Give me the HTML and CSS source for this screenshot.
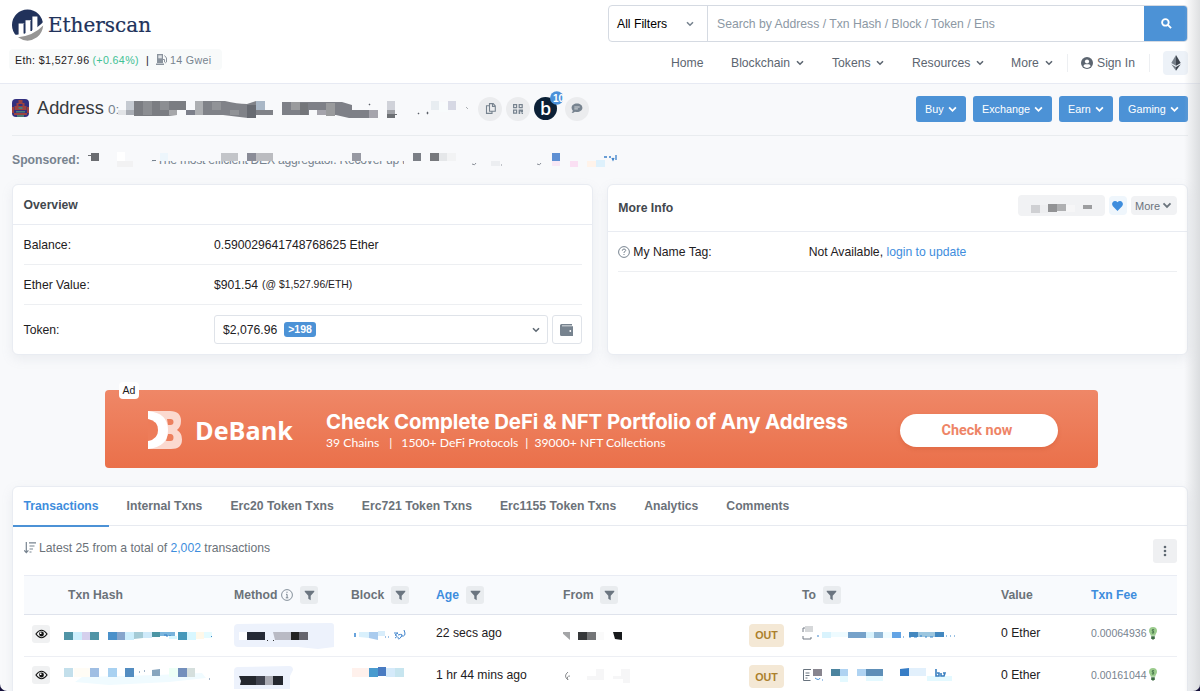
FILE: index.html
```html
<!DOCTYPE html>
<html lang="en">
<head>
    <meta charset="UTF-8">
    <title>Address | Etherscan</title>
    <link rel="stylesheet" href="styles.css">
</head>
<body>
    <!-- shared icons -->
    <svg class="sprite" width="0" height="0">
        <symbol id="chev" viewBox="0 0 8 6"><path d="M1 1.2l3 3 3-3" fill="none" stroke="currentColor" stroke-width="1.6"/></symbol>
        <symbol id="funnel" viewBox="0 0 12 12"><path d="M.8 .8h10.4v1L7.3 6.2v5L4.7 9.6V6.2L.8 1.8z" fill="currentColor"/></symbol>
        <symbol id="eye" viewBox="0 0 14 10"><path d="M1 5q6-8 12 0q-6 8-12 0z" fill="none" stroke="currentColor" stroke-width="1.2"/><circle cx="7" cy="5" r="2.6" fill="currentColor"/><circle cx="6.2" cy="4.1" r=".9" fill="#fff"/></symbol>
        <symbol id="bulb" viewBox="0 0 8 13"><path d="M4 0a4 4 0 0 1 4 4c0 2-1.6 2.6-1.8 4.8H1.8C1.6 6.6 0 6 0 4a4 4 0 0 1 4-4z" fill="#9bcb8d"/><path d="M2.2 9.3h3.6v2L4.8 12.6H3.2L2.2 11.3z" fill="#3c6b42"/><path d="M5.2 2.9q-1.2-.7-2 0t.8 1.3t.8 1.4t-2 0M4 2v4.8" fill="none" stroke="#3c6b42" stroke-width=".7"/></symbol>
    </svg>

    <div class="page">
        <header class="header">
            <div class="brand">
                <svg class="logo" width="142" height="34" viewBox="12 8 142 34">
                    <circle cx="27.5" cy="25" r="15.5" fill="#21325b"/>
                    <path d="M12 35Q32 35 45 20V44H12z" fill="#fff"/>
                    <path d="M18 37.2Q33 36 43.2 25.5Q42.5 33 37 37.3Q27.5 44 18 37.2z" fill="#979695"/>
                    <path d="M18.6 36V23.4h5.6V35zM25.5 34V20.2h5.4V32zM32.4 31V16.4h5V28z" fill="#fff"/>
                    <path d="M24.3 24v9.5M31.2 21v10" stroke="#21325b" stroke-width="1.5"/>
                    <text x="48" y="31.7" textLength="103" lengthAdjust="spacingAndGlyphs" class="logo-text">Etherscan</text>
                </svg>
                <div class="price">
                    <span class="price-eth">Eth: $1,527.96</span>
                    <span class="price-up">(+0.64%)</span>
                    <span class="price-bar">|</span>
                    <svg width="12" height="11" viewBox="0 0 12 11"><path d="M1 0h6v9H1zM0 9.5h8V11H0z" fill="#8a939d"/><path d="M2.3 1.3h3.5v3H2.3z" fill="#dfe3e6"/><path d="M7 5.5h1.5V8q1 1.5 2 0V4L8.5 1.5" fill="none" stroke="#8a939d"/></svg>
                    <span class="gwei">14 Gwei</span>
                </div>
            </div>
            <div class="header-right">
                <div class="search">
                    <div class="filters">All Filters <svg width="8" height="6"><use href="#chev"/></svg></div>
                    <div class="search-input">Search by Address / Txn Hash / Block / Token / Ens</div>
                    <div class="search-btn"><svg width="11" height="11" viewBox="0 0 12 12" fill="none" stroke="#fff" stroke-width="2"><circle cx="4.8" cy="4.8" r="3.6"/><path d="M7.5 7.5l3.5 3.5"/></svg></div>
                </div>
                <nav class="nav">
                    <span class="nav-home">Home</span>
                    <span class="nav-chain">Blockchain <svg width="8" height="6"><use href="#chev"/></svg></span>
                    <span class="nav-tokens">Tokens <svg width="8" height="6"><use href="#chev"/></svg></span>
                    <span class="nav-res">Resources <svg width="8" height="6"><use href="#chev"/></svg></span>
                    <span class="nav-more">More <svg width="8" height="6"><use href="#chev"/></svg></span>
                    <span class="sign-in">
                        <svg width="12" height="12" viewBox="0 0 12 12"><circle cx="6" cy="6" r="6" fill="#5c6570"/><circle cx="6" cy="4.5" r="2.1" fill="#fff"/><path d="M2.3 9.3q.5-2 2-2h3.4q1.5 0 2 2Q6 12.5 2.3 9.3z" fill="#fff"/></svg>
                        Sign In
                    </span>
                    <span class="eth-btn"><svg width="10" height="16" viewBox="0 0 10 17"><path d="M5 0L0 8.5 5 11.5z" fill="#77808a"/><path d="M5 0l5 8.5-5 3z" fill="#3d444d"/><path d="M0 9.8l5 7v-4z" fill="#77808a"/><path d="M10 9.8l-5 7v-4z" fill="#3d444d"/></svg></span>
                </nav>
            </div>
        </header>

        <section class="address">
            <svg class="blockie" width="17" height="18" viewBox="0 0 17 18">
                <rect width="17" height="18" rx="4" fill="#33307f"/>
                <path d="M6.5 1h4v3h2v3h2v4h-12V7h2V4h2zM0 8h2v6H0zM15 8h2v6h-2zM2 14h13v2H2z" fill="#9b4240"/>
                <path d="M6.5 8h4v2h-4zM4 12h9v1.5H4zM5 16h7v2H5z" fill="#4a7d79"/>
                <path d="M6.5 5h4v2h-4z" fill="#33307f"/>
            </svg>
            <h1>Address</h1>
            <svg class="hash" width="366" height="28" viewBox="108 94 366 28">
                <text x="108" y="113" class="hash-text">0:</text>
                <path d="M118 109h8v5h-8z" fill="#e2e4e7"/><path d="M126 100h8v9h-8z" fill="#c5cad1"/><path d="M126 109h8v5h-8z" fill="#a9adb4"/>
                <path d="M134 100h52v9h-9v5l-9 1h-34z" fill="#7b7d82"/><path d="M143 100h9v14h-9zM160 100h9v9h-9z" fill="#8c8e92"/><path d="M169 109h8v5h-8z" fill="#a6a7aa"/>
                <path d="M186 109h9v5h-9z" fill="#7c7f8a"/><path d="M195 100h30q12 3 22 3l9-3h9v9h8v5h-18l-7 3-25-3h-28z" fill="#808288"/><path d="M195 100h8v14h-8z" fill="#adafb2"/><path d="M212 101h9v8h-9zM230 109h9v5h-9z" fill="#919397"/><path d="M256 100h9v9h-9z" fill="#a9b7c6"/><path d="M247 104h9v13h-9z" fill="#686b72"/>
                <path d="M282 101h60l10 3v5h26v8h-29l-13-3h-19v-5h-8v5h-27z" fill="#7e8087"/><path d="M291 101h9v8h-9zM326 102h9v13h-9z" fill="#9a9b9d"/><path d="M300 102h8v12h-8z" fill="#74767a"/><path d="M369 109h9v8h-9zM317 109h9v5h-9z" fill="#a5a4ac"/>
                <path d="M387 100h8v9h-8z" fill="#d0d2d9"/><path d="M387 109h8v4h-8z" fill="#9fa1a6"/><path d="M387 113h10v1h-2v3h-8z" fill="#6d7074"/>
                <path d="M431 100h8v9h-8z" fill="#e8edf1"/><path d="M439 101h9v10h-9z" fill="#f8fbfc"/><path d="M448 100h8v9h-8z" fill="#d6d8e4"/>
                <path d="M369 103h1v1h-1zM418 112h1v1h-1zM427 111h1v2h-1zM466 106l2 2" fill="#5d6269" stroke="#5d6269" stroke-width=".5"/>
            </svg>
            <div class="tools">
                <span class="tool"><svg width="11" height="11" viewBox="0 0 11 11" fill="none" stroke="#77838f" stroke-width="1.1"><path d="M4.5 .6h3.7L10.3 3v5.2H4.5zM7.5 .8v2.6h2.6M4.3 2.8H1.5v7.6h5.5V8.5"/></svg></span>
                <span class="tool"><svg width="10" height="10" viewBox="0 0 10 10"><path d="M.6.6h3v3h-3zM6.2.6h3v3h-3zM.6 6.2h3v3h-3z" fill="none" stroke="#77838f" stroke-width="1.2"/><path d="M5.6 5.6H10v3H8V7.5h-.8V10H5.6zM8.6 9H10v1H8.6z" fill="#77838f"/></svg></span>
                <span class="tool tool-b">b<svg class="badge" width="13" height="14" viewBox="0 0 13 14"><circle cx="6.8" cy="7" r="6.8" fill="#4a90d9"/><text x="3" y="11">10</text></svg></span>
                <span class="tool"><svg width="12" height="11" viewBox="0 0 12 11"><path d="M6 .5c3 0 5.4 1.8 5.4 4.3S9 9 6 9q-1 0-2-.3Q2.5 10 .6 10q1.2-1.2 1.2-2.2Q.6 6.5.6 4.8C.6 2.3 3 .5 6 .5z" fill="#77838f"/><path d="M3.3 4h5.4M3.3 5.9h3.6" stroke="#ebeef0" stroke-width=".8"/></svg></span>
            </div>
            <div class="actions">
                <span class="btn btn-buy">Buy <svg width="9" height="7"><use href="#chev"/></svg></span>
                <span class="btn btn-exchange">Exchange <svg width="9" height="7"><use href="#chev"/></svg></span>
                <span class="btn btn-earn">Earn <svg width="9" height="7"><use href="#chev"/></svg></span>
                <span class="btn btn-gaming">Gaming <svg width="9" height="7"><use href="#chev"/></svg></span>
            </div>
        </section>

        <section class="sponsored">
            <b>Sponsored:</b>
            <svg width="536" height="20" viewBox="86 150 536 20">
                <text x="150" y="164" textLength="262" class="ad-line">- The most efficient DEX aggregator. Recover up to</text>
                <path d="M86 150h536v11H86z" fill="#f8f9fb"/><path d="M152 160.500h4" stroke="#77838f"/><path d="M404 160h9v8h-9z" fill="#f8f9fb"/>
                <path d="M91 153h8v8h-8z" fill="#6b6d71"/><path d="M88 155h3v1h-3z" fill="#6b6d71"/><path d="M117 152h8v9h-8z" fill="#fff"/><path d="M117 161h16v6h-16z" fill="#f2f2f3"/><path d="M160 153h8v8h-8z" fill="#edf6fc"/>
                <path d="M221 153h17v8h-13l-4 1z" fill="#c3c5c9"/><path d="M247 153h9v8h-9z" fill="#8a8c97"/><path d="M256 153h17v8h-17z" fill="#bbbcc0"/>
                <path d="M352 153h9v8h-9z" fill="#9799a2"/><path d="M413 153h8v8h-8z" fill="#7b7f86"/><path d="M430 153h9v8h-9z" fill="#77797d"/><path d="M439 153h8v8h-8z" fill="#e5e7e9"/><path d="M447 153h9v8h-9z" fill="#f2f3f4"/>
                <path d="M472 164q3 2 4-1M501 165h1M537 164q3 2 4-1" fill="none" stroke="#8a8f98"/><path d="M491 161h9v5h-9z" fill="#eceef1"/><path d="M552 153h8v8h-8z" fill="#5e90d3"/><path d="M552 161h8v5h-8z" fill="#f8e8f5"/><path d="M570 161h8v6h-8z" fill="#fadff3"/><path d="M587 161h9v6h-9z" fill="#fff3ea"/><path d="M596 160h9v7h-9z" fill="#def1fc"/><path d="M604 157h3m2 0h2m1 1l1 2 1-2M616 155v5" fill="none" stroke="#3b80c9" stroke-width="1.300"/>
            </svg>
        </section>

        <section class="cards">
            <div class="card overview">
                <div class="card-title">Overview</div>
                <div class="card-body">
                    <div class="info-row"><span class="label">Balance:</span>0.590029641748768625 Ether</div>
                    <div class="info-row"><span class="label">Ether Value:</span>$901.54 <span class="small">(@ $1,527.96/ETH)</span></div>
                    <div class="info-row token-row">
                        <span class="label">Token:</span>
                        <div class="token-select">$2,076.96 <span class="count">&gt;198</span><svg width="8" height="6"><use href="#chev"/></svg></div>
                        <div class="wallet"><svg width="13" height="12" viewBox="0 0 13 12"><path d="M1.5 0H12v1.5H2v.8h11V12H1.5Q0 12 0 10.5v-9Q0 0 1.5 0z" fill="#77838f"/><circle cx="10.3" cy="7" r=".9" fill="#fff"/></svg></div>
                    </div>
                </div>
            </div>
            <div class="card more-info">
                <div class="card-title">More Info
                    <div class="pills">
                        <span class="pill pill-tag"><svg width="87" height="21" viewBox="1018 195 87 21"><path d="M1031 205h9v8h-9z" fill="#cfd0d3"/><path d="M1040 205h8v8h-8z" fill="#edeef0"/><path d="M1048 204h9v8h-9z" fill="#929395"/><path d="M1057 204h9v7h-9z" fill="#afb0b2"/><path d="M1066 205h9v7h-9z" fill="#f6f6f7"/><path d="M1083 205h9v4h-9z" fill="#9d9ea0"/></svg></span>
                        <span class="pill pill-heart"><svg width="11" height="10" viewBox="0 0 11 10"><path d="M5.5 10L.9 5.2C-.9 3.2.5 0 3 0q1.5 0 2.5 1.3Q6.5 0 8 0c2.5 0 3.9 3.2 2.1 5.2z" fill="#3e8ddd"/></svg></span>
                        <span class="pill pill-more">More <svg width="10" height="7"><use href="#chev"/></svg></span>
                    </div>
                </div>
                <div class="card-body">
                    <div class="info-row"><span class="label"><svg width="12" height="12" viewBox="0 0 12 12"><circle cx="6" cy="6" r="5.4" fill="none" stroke="#77838f"/><path d="M4.3 4.7Q4.4 3 6 3t1.7 1.5Q7.7 5.3 6 6.2v.8M6 8v1" fill="none" stroke="#77838f"/></svg> My Name Tag:</span>Not Available,&nbsp;<a>login to update</a></div>
                </div>
            </div>
        </section>

        <section class="banner">
            <span class="ad">Ad</span>
            <svg class="debank" width="34" height="39" viewBox="0 0 34 39">
                <path d="M0 0h22q11 0 11 10 0 6-4 9 5 3 5 9.5Q34 38 23 38H0z" fill="#fbd9cf"/>
                <path d="M19 8h3.5q3 0 3 3t-3 3H20zM20 23h2.5q3 0 3 3.5t-3 3.5H18z" fill="#ed7f5d"/>
                <path d="M0 0Q20 2 20 19T0 38v-8Q10 28 10 19T0 8z" fill="#fff"/>
                <path d="M0 8Q10 10 10 19T0 30z" fill="#ed7c59"/>
            </svg>
            <span class="debank-name">DeBank</span>
            <div class="banner-text">
                <div class="banner-head">Check Complete DeFi &amp; NFT Portfolio of Any Address</div>
                <div class="banner-sub"><span>39 Chains</span><span class="sep">|</span><span>1500+ DeFi Protocols</span><span class="sep sep-tight">|</span><span>39000+ NFT Collections</span></div>
            </div>
            <span class="check">Check now</span>
        </section>

        <section class="card txns">
            <div class="tabs">
                <span class="tab active">Transactions</span>
                <span class="tab">Internal Txns</span>
                <span class="tab">Erc20 Token Txns</span>
                <span class="tab">Erc721 Token Txns</span>
                <span class="tab">Erc1155 Token Txns</span>
                <span class="tab">Analytics</span>
                <span class="tab">Comments</span>
            </div>
            <div class="summary">
                <svg width="12" height="12" viewBox="0 0 12 12" fill="none" stroke="#77838f" stroke-width="1.2"><path d="M2.3 0v10.5M.2 8.3l2.1 2.4 2.1-2.4M5 .9h7M5.500 4h5M5.500 7h3.500M5.500 10h2"/></svg>
                <span>Latest 25 from a total of <a>2,002</a> transactions</span>
                <span class="dots"><svg width="4" height="12" viewBox="0 0 4 12" fill="#5e6872"><circle cx="2" cy="2" r="1.3"/><circle cx="2" cy="6" r="1.3"/><circle cx="2" cy="10" r="1.3"/></svg></span>
            </div>
            <div class="table">
                <div class="row head">
                    <span></span>
                    <span>Txn Hash</span>
                    <span>Method <svg class="info" width="12" height="12" viewBox="0 0 12 12"><circle cx="6" cy="6" r="5.4" fill="none" stroke="#77838f" stroke-width=".9"/><path d="M6 2.7v1.2M5 5.3h1.1v3.4M4.8 8.8h2.5" fill="none" stroke="#77838f"/></svg><i class="filter"><svg width="11" height="11"><use href="#funnel"/></svg></i></span>
                    <span>Block <i class="filter"><svg width="11" height="11"><use href="#funnel"/></svg></i></span>
                    <span><a>Age</a> <i class="filter"><svg width="11" height="11"><use href="#funnel"/></svg></i></span>
                    <span>From <i class="filter"><svg width="11" height="11"><use href="#funnel"/></svg></i></span>
                    <span></span>
                    <span>To <i class="filter"><svg width="11" height="11"><use href="#funnel"/></svg></i></span>
                    <span>Value</span>
                    <span><a>Txn Fee</a></span>
                </div>
                <div class="row">
                    <span class="view"><svg width="13" height="10"><use href="#eye"/></svg></span>
                    <span class="pixels"><svg width="160" height="40" viewBox="64 615 160 40"><path d="M64 632h9v8h-9zM90 632h9v8h-9z" fill="#5094a6"/><path d="M73 632h9v8h-9zM125 632h9v8h-9z" fill="#cdeffd"/><path d="M82 632h8v8h-8z" fill="#d5d0ed"/><path d="M108 632h9v8h-9z" fill="#4b91ca"/><path d="M117 632h8v8h-8z" fill="#86a5cc"/><path d="M134 632h9v6l-9 1z" fill="#a4cbd6"/><path d="M143 632h9v6h-9z" fill="#cfeafa"/><path d="M152 632h8v5h-8z" fill="#4b95a4"/><path d="M160 632h15v4h-15z" fill="#79b4dd"/><path d="M164 635h3v2m3-2v2h3" fill="none" stroke="#377fc5"/><path d="M169 636h8v3h-8zM187 632h9v8h-9z" fill="#d8f7ff"/><path d="M178 632h9v8h-9z" fill="#4698ba"/><path d="M196 632h8v7h-8z" fill="#fff8e9"/><path d="M204 632h8v6h-8z" fill="#e5fbff"/><path d="M211 636h1v1h-1z" fill="#418bc8"/></svg></span>
                    <span class="pixels"><svg width="110" height="40" viewBox="234 615 110 40"><path d="M238 624l93-1q3 0 3 3v21l-16 2-20-2h-60q-4 0-4-4v-15q0-4 4-4z" fill="#edf2fc"/><path d="M239 632h8v8h-8z" fill="#fff"/><path d="M247 632h18v8h-18z" fill="#252a36"/><path d="M267 640h1v1h-1zM273 640h1v1h-1z" fill="#333"/><path d="M273 632h18v8h-16z" fill="#b9bac4"/><path d="M291 632h8v8h-8z" fill="#222"/><path d="M299 632h9v8h-9z" fill="#65656d"/></svg></span>
                    <span class="pixels"><svg width="60" height="40" viewBox="351 615 60 40"><path d="M355 633v4" stroke="#3585d1" stroke-width="1.500"/><path d="M359 632h10v6l-10-1z" fill="#d9f0fc"/><path d="M369 632h9v8l-9-2z" fill="#a9cbee"/><path d="M378 631h7v5h-7z" fill="#d8edfb"/><path d="M385 637h1m2 0h1M394 633h4l-3 2q4 1 0 3m3-3q6-2 3 2t-3 0M404 630q3 7-3 6" fill="none" stroke="#3e83cc"/></svg></span>
                    <span>22 secs ago</span>
                    <span class="pixels"><svg width="100" height="40" viewBox="563 615 100 40"><path d="M561 632h9v8z" fill="#a4a5a7"/><path d="M578 632h9v8h-9z" fill="#36383a"/><path d="M587 632h9v8h-9z" fill="#737476"/><path d="M596 632h8v8h-8z" fill="#fafafa"/><path d="M613 632h9v8l-7-1z" fill="#17191b"/></svg></span>
                    <span class="out">OUT</span>
                    <span class="pixels"><svg width="170" height="40" viewBox="802 615 170 40"><path d="M803 632v-4h2m-2 8v3h8v-2" fill="none" stroke="#727b85"/><path d="M805 626h8v6h-8z" fill="#d6d8da"/><path d="M817 636h2" stroke="#3e87ce"/><path d="M822 632h9v6h-9zM857 632h17v6h-17z" fill="#d9f3fd"/><path d="M831 632h17v5h-17zM883 632h9v6h-9z" fill="#eefbff"/><path d="M848 632h18v6h-18z" fill="#76a2ca"/><path d="M874 632h9v6h-9z" fill="#8eb6d5"/><path d="M892 632h9v6h-9z" fill="#63a4e5"/><path d="M909 632h9v5h-9zM935 632h9v5h-9z" fill="#4488bf"/><path d="M918 632h17v5h-17z" fill="#9cc6df"/><path d="M903 637h1m5 0h2m3 0h3m3-1h2m3 1h2m3 0h3m3-1h2m4 0h1m3 0h1m3 0h1m3 0h1" stroke="#3584ca"/></svg></span>
                    <span>0 Ether</span>
                    <span class="fee">0.00064936 <svg width="8" height="13"><use href="#bulb"/></svg></span>
                </div>
                <div class="row">
                    <span class="view"><svg width="13" height="10"><use href="#eye"/></svg></span>
                    <span class="pixels"><svg width="160" height="40" viewBox="64 656 160 40"><path d="M64 667h9v9h-9z" fill="#c3dfeb"/><path d="M82 676l75-2 45-2 4 5-37 4-60 3-34-3z" fill="#f0fbff"/><path d="M90 667h9v9h-9z" fill="#9fbee3"/><path d="M108 667h9v9h-9z" fill="#a8d1f1"/><path d="M125 667h9v9h-9z" fill="#548dc1"/><path d="M152 669l8-1v7h-8z" fill="#87a5be"/><path d="M178 667h9v9h-9z" fill="#738fbc"/><path d="M187 667h8v9h-8z" fill="#d5dfdd"/><path d="M169 667h9v9h-9z" fill="#edfff6"/><path d="M74 667h16v9h-16z" fill="#fffcf5"/><path d="M139 671h1m4-1h1M209 678h1" stroke="#496d96" stroke-width="1.200"/></svg></span>
                    <span class="pixels"><svg width="110" height="40" viewBox="234 656 110 40"><path d="M238 666l51-1q4 0 4 4l-3 6v13h-56v-18q0-4 4-4z" fill="#edf2fc"/><path d="M239 675h44v9h-43l1-4z" fill="#24272e"/><path d="M256 675h9v9h-9z" fill="#41444f"/><path d="M265 675h8v9h-8z" fill="#aaabb3"/></svg></span>
                    <span class="pixels"><svg width="60" height="40" viewBox="351 656 60 40"><path d="M352 667h17v9h-17z" fill="#fff1ec"/><path d="M369 667h9v9h-9z" fill="#499bcf"/><path d="M378 666h8v9h-8z" fill="#497bc2"/><path d="M386 667h9v9h-9z" fill="#d5eafa"/><path d="M395 667h9v9h-9z" fill="#c7e5ef"/></svg></span>
                    <span>1 hr 44 mins ago</span>
                    <span class="pixels"><svg width="100" height="40" viewBox="563 656 100 40"><path d="M568 671q-5 4 0 8m2-4q-4 0-2 4" fill="none" stroke="#8a8c8f"/><path d="M587 675h9v-7h8v11h-17zM613 675h8v-7h9v14h-7v-4h-10z" fill="#f6f6f7"/></svg></span>
                    <span class="out">OUT</span>
                    <span class="pixels"><svg width="170" height="40" viewBox="802 656 170 40"><path d="M811 668.500h-7.500v11h7M805.500 672h4m-4 2.500h4m-4 2.500h2" fill="none" stroke="#68737e"/><path d="M813 668h9v7h-9z" fill="#88858f"/><path d="M815 677q4 3 5 0m2 2h1" fill="none" stroke="#488fd5"/><path d="M831 668h9v7h-9z" fill="#4c849f"/><path d="M840 668h8v7h-8zM857 668h9v7h-9z" fill="#afd3f2"/><path d="M866 668h17v7h-17z" fill="#5e8fb8"/><path d="M840 675h8v6h-8zM866 675h17v5h-17zM927 675h25v5h-25z" fill="#e4f9ff"/><path d="M900 668l9-1v8h-9z" fill="#377dc6"/><path d="M909 667h17v8h-17z" fill="#e2f0fc"/><path d="M936 668v7h3v-3h-2m4 0v3h3l1-3h-2" fill="none" stroke="#397fc0" stroke-width="1.600"/></svg></span>
                    <span>0 Ether</span>
                    <span class="fee">0.00161044 <svg width="8" height="13"><use href="#bulb"/></svg></span>
                </div>
            </div>
        </section>
        <div class="edge"></div>
    </div>
</body>
</html>
```

FILE: styles.css
```css
* { box-sizing: border-box; }
html { background: #15103a; }
body {
    margin: 0;
    overflow: hidden;
    font-family: "Liberation Sans", Arial, sans-serif;
    font-size: 12.2px;
    color: #1e2022;
    white-space: nowrap;
}
svg { display: block; flex: none; }
a { color: #3e8ddd; }
.sprite { position: absolute; }
.page {
    position: relative;
    height: 691px;
    overflow: hidden;
    padding: 0 12px;
    background: #f8f9fb;
    border-radius: 0 0 7px 7px;
}
/* soft shade along the right side of the window */
.edge {
    position: absolute;
    top: 0;
    right: 0;
    width: 16px;
    height: 100%;
    background: linear-gradient(to right, rgba(190, 193, 196, 0), rgba(190, 193, 196, .5));
}

/* header */
.header {
    display: flex;
    justify-content: space-between;
    height: 84px;
    margin: 0 -12px;
    padding: 5px 12px 0;
    background: #fff;
    border-bottom: 1px solid #e7eaf3;
}
.brand { padding-top: 3px; }
.logo-text {
    font-family: "DejaVu Serif", serif;
    font-size: 20.5px;
    fill: #21325b;
    stroke: #21325b;
    stroke-width: .2px;
}
.price {
    display: flex;
    align-items: center;
    width: 213px;
    height: 21px;
    margin: 7px 0 0 -3px;
    padding-left: 6px;
    background: #f8fafa;
    border-radius: 4px;
    font-size: 10.7px;
    letter-spacing: .35px;
}
.price-up { margin-left: 3px; color: #3fc195; }
.price-bar { margin: 0 7px; }
.gwei { margin-left: 2px; color: #77838f; letter-spacing: .3px; }
.header-right { width: 580px; }
.search {
    display: flex;
    height: 37px;
    border: 1px solid #d5dae2;
    border-radius: 4px;
    overflow: hidden;
}
.filters {
    display: flex;
    align-items: center;
    justify-content: space-between;
    width: 99px;
    padding: 0 13px 0 8px;
    border-right: 1px solid #d5dae2;
    color: #000;
}
.filters svg { color: #77838f; }
.search-input { flex: 1; padding-left: 9px; line-height: 36px; color: #8c98a4; }
.search-btn {
    display: flex;
    align-items: center;
    justify-content: center;
    width: 44px;
    margin: -1px;
    background: #4c92d6;
}
.nav { display: flex; align-items: center; height: 41px; padding-left: 63px; color: #5c6570; }
.nav span { display: flex; align-items: center; }
.nav span svg { margin-left: auto; }
.nav-home { width: 60px; }
.nav-chain { width: 73px; }
.nav-tokens { width: 52px; margin-left: 28px; }
.nav-res { width: 72px; margin-left: 28px; }
.nav-more { width: 42px; margin-left: 27px; }
.nav .sign-in {
    width: 83px;
    height: 18px;
    margin-left: 14px;
    padding-left: 13px;
    border: solid #edeff2;
    border-width: 0 1px;
}
.nav .sign-in svg { margin: 0 4px 0 0; }
.nav .eth-btn { width: 25px; height: 24px; margin-left: auto; background: #edf2f8; border-radius: 4px; }
.nav .eth-btn svg { margin: auto; }

/* address line */
.address {
    display: flex;
    align-items: center;
    height: 52px;
    padding-bottom: 2px;
    border-bottom: 1px solid #e9ecef;
}
.blockie { margin-bottom: 2px; }
h1 { width: 71px; margin: 0 0 0 8px; font-size: 18.2px; font-weight: 400; color: #36393d; }
.hash-text { font-size: 13.5px; fill: #77838f; }
.tools { display: flex; gap: 4px; margin-left: 4px; }
.tool {
    position: relative;
    display: flex;
    align-items: center;
    justify-content: center;
    width: 24px;
    height: 24px;
    border-radius: 50%;
    background: #ebecee;
}
.tool-b {
    width: 23px;
    height: 23px;
    margin-right: 4px;
    background: #0b2036;
    color: #fff;
    font: 600 18px "Open Sans", sans-serif;
}
.badge { position: absolute; left: 16px; top: -6px; }
.badge text { font: bold 10px "Liberation Sans", sans-serif; fill: #fff; }
.actions { display: flex; gap: 7px; margin-left: auto; }
.btn {
    display: flex;
    align-items: center;
    justify-content: space-between;
    height: 26px;
    margin-top: 1px;
    padding: 0 9px;
    border-radius: 3px;
    background: #4c92d6;
    color: #fff;
    font-size: 10.8px;
}
.btn-buy { width: 50px; }
.btn-exchange { width: 79px; }
.btn-earn { width: 54px; }
.btn-gaming { width: 69px; margin-left: -1px; }

.sponsored { display: flex; align-items: center; height: 48px; color: #77838f; }
.sponsored b { width: 74px; }
.ad-line { font-size: 12.2px; fill: #77838f; }

/* overview cards */
.card {
    background: #fff;
    border: 1px solid #e9ecf2;
    border-radius: 6px;
    box-shadow: 0 4px 12px rgba(140, 152, 164, .12);
}
.cards { display: flex; gap: 14px; height: 171px; margin-right: .5px; }
.cards .card { flex: 1; }
.card-title {
    display: flex;
    align-items: center;
    height: 40px;
    padding: 0 10px 0 10.6px;
    border-bottom: 1px solid #e9ecf2;
    font-weight: bold;
    color: #42474d;
}
.more-info .card-title { height: 47px; }
.card-body { padding: 0 10px 0 10.6px; }
.info-row { display: flex; align-items: center; height: 40px; border-bottom: 1px solid #edeff2; }
.label { display: flex; align-items: center; gap: 3px; width: 190.4px; }
.small { margin-left: 4px; font-size: 10.4px; }
.token-row { height: 49px; border: 0; }
.token-select, .wallet {
    display: flex;
    align-items: center;
    height: 29px;
    border: 1px solid #dfe3e9;
    border-radius: 3px;
}
.token-select { flex: 1; padding: 0 7px 0 8px; }
.token-select svg { margin-left: auto; color: #5f6973; }
.count {
    margin-left: 7px;
    padding: 0 4px;
    border-radius: 3px;
    background: #4c92d6;
    color: #fff;
    font-size: 10.5px;
    font-weight: bold;
    line-height: 15px;
}
.wallet { width: 30px; margin-left: 4px; justify-content: center; }
.pills { display: flex; align-items: center; gap: 4px; margin: 0 0 5px auto; font-weight: 400; }
.pill { display: flex; align-items: center; justify-content: center; height: 19px; border-radius: 4px; background: #f1f2f4; }
.pill-tag { width: 87px; height: 21px; }
.pill-heart { width: 18px; background: #eff6fc; }
.pill-more { width: 46px; gap: 2px; font-size: 11px; color: #6b747d; }

/* ad banner */
.banner {
    position: relative;
    display: flex;
    align-items: center;
    width: 993px;
    height: 78px;
    margin: 35px 0 0 93px;
    padding: 0 40px 0 43px;
    border-radius: 4px;
    background: linear-gradient(#ef8767, #ea704a);
    color: #fff;
}
.ad {
    position: absolute;
    left: 14px;
    top: -8px;
    width: 20px;
    border-radius: 4px;
    background: #fff;
    color: #1e2022;
    font-size: 10.5px;
    line-height: 17px;
    text-align: center;
}
.debank { margin-top: 3px; }
.debank-name { width: 131px; margin: 1px 0 0 13px; font: bold 25.2px "Open Sans", sans-serif; }
.banner-text { padding-top: 3px; }
.banner-head { font: bold 20.4px/24px Inter, sans-serif; letter-spacing: -.09px; }
.banner-sub { display: flex; font: 12.2px/18px Lato, sans-serif; }
.sep { margin: 0 9px 0 10px; }
.sep-tight { margin: 0 6px 0 7px; }
.check {
    width: 158px;
    margin: 2px 0 0 auto;
    padding-right: 4px;
    border-radius: 17px;
    background: #fff;
    box-shadow: 0 2px 4px rgba(180, 60, 20, .2);
    color: #ee8466;
    font: bold 14.4px/33px Roboto, sans-serif;
    text-align: center;
}

/* transactions */
.txns { height: 230px; margin: 18px .5px 0 0; }
.tabs { display: flex; height: 39px; border-bottom: 1px solid #e7eaf0; }
.tab { margin-right: 7.2px; padding: 0 10.4px; line-height: 38px; font-weight: bold; color: #6b7279; }
.tab.active { height: 40px; border-bottom: 2px solid #4c92d6; color: #3e8ddd; }
.summary { display: flex; align-items: center; gap: 3px; height: 49px; padding: 0 10px 6px 11px; color: #6b7279; }
.dots {
    display: flex;
    align-items: center;
    justify-content: center;
    width: 24px;
    height: 24px;
    margin: 7px 0 0 auto;
    border-radius: 3px;
    background: #eff0f2;
}
.table { margin: 0 10px 0 11px; }
.row {
    display: grid;
    grid-template-columns: 40px 170px 117px 85px 127px 186px 53px 199px 90px 1fr;
    align-items: center;
    height: 41.5px;
    border-bottom: 1px solid #edeff4;
}
.row > span { display: flex; align-items: center; margin-bottom: 4px; }
.row .pixels { margin-bottom: 0; }
.row .view { justify-content: center; width: 18px; height: 18px; margin: 0 0 3px 8px; border-radius: 3px; background: #f0f1f2; color: #111; }
.head {
    height: 40px;
    border-top: 1px solid #e9ecf4;
    border-bottom: 1px solid #dfe3ec;
    background: #f8fafd;
    font-weight: bold;
    color: #6b7279;
}
.row.head > span { margin-bottom: 0; }
.head > span:nth-child(2) { padding-left: 4px; }
.info { margin-left: 4px; }
.filter {
    display: flex;
    align-items: center;
    justify-content: center;
    width: 18px;
    height: 18px;
    margin-left: 7px;
    border-radius: 3px;
    background: #e9ecef;
    color: #6b7580;
}
.row .out {
    justify-content: center;
    width: 35px;
    height: 23px;
    margin: 0;
    border-radius: 4px;
    background: #f4e8d5;
    color: #ab802c;
    font-size: 10.7px;
    font-weight: bold;
}
.row .fee { gap: 3px; font-size: 10.5px; color: #77838f; }
```
